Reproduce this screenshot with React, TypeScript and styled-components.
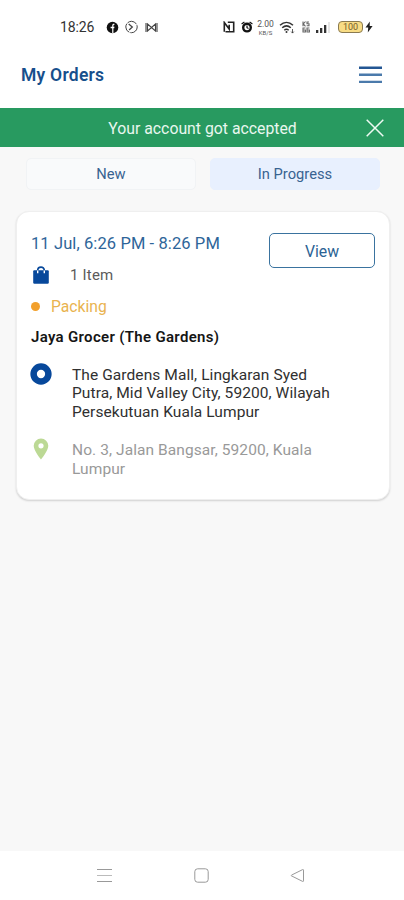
import React from "react";
import styled, { createGlobalStyle } from "styled-components";

const navy = "#174f8c";

const GlobalStyle = createGlobalStyle`
  * { box-sizing: border-box; }
  body { margin: 0; background: #f8f8f8; font-family: Roboto, "Liberation Sans", sans-serif; }
  button { font: inherit; margin: 0; padding: 0; cursor: pointer; }
  svg { display: block; flex: none; }
`;

const Screen = styled.div`
  width: 404px;
  height: 900px;
  display: flex;
  flex-direction: column;
  background: #f8f8f8;
  overflow: hidden;
`;

const StatusBar = styled.div`
  height: 52px;
  padding: 2px 31px 0 60px;
  display: flex;
  align-items: center;
  justify-content: space-between;
  background: #fff;
  color: #333;
`;

const StatusStart = styled.div`
  display: flex;
  align-items: center;
  gap: 6.5px;
`;

const Clock = styled.time`
  width: 39px;
  font-size: 14px;
  letter-spacing: -0.1px;
`;

const StatusEnd = styled.div`
  display: grid;
  grid-template-columns: 18px 15px 23px 23px 14px 22px 27px 8px;
  align-items: center;
`;

const NetSpeed = styled.div`
  width: 19px;
  display: flex;
  flex-direction: column;
  align-items: center;
  font-size: 8.5px;
  line-height: 10px;
  color: #555;
`;

const SpeedUnit = styled.span`
  font-size: 6px;
  line-height: 7px;
`;

const Battery = styled.div`
  width: 25px;
  height: 12px;
  border: 1px solid #8a7a50;
  border-radius: 4px;
  background: #f8dc85;
  color: #75602a;
  font-size: 9px;
  line-height: 10px;
  text-align: center;
`;

const Header = styled.header`
  height: 56px;
  padding: 0 22px 10px 21px;
  display: flex;
  align-items: center;
  justify-content: space-between;
  background: #fff;
`;

const Title = styled.h1`
  margin: 0;
  font-size: 17.5px;
  font-weight: 600;
  letter-spacing: 0.25px;
  color: ${navy};
`;

const IconButton = styled.button`
  display: flex;
  border: 0;
  background: none;
`;

const Banner = styled.div`
  height: 39px;
  padding: 0 20px 0 39px;
  display: flex;
  align-items: center;
  background: #289a60;
  color: #e9f7ef;
`;

const BannerText = styled.p`
  flex: 1;
  margin: 0;
  padding-top: 1px;
  text-align: center;
  font-size: 15.8px;
`;

const Tabs = styled.div`
  display: grid;
  grid-template-columns: 170px 170px;
  gap: 14px;
  padding: 11px 0 0 26px;
`;

const Tab = styled.button<{ $active?: boolean }>`
  height: 32px;
  border: 1px solid ${(p) => (p.$active ? "#e8f0fe" : "#f1f3f5")};
  border-radius: 5px;
  background: ${(p) => (p.$active ? "#e8f0fe" : "#f9fafb")};
  color: #386391;
  font-size: 14.7px;
`;

const Card = styled.article`
  height: 289px;
  margin: 21px 14px 0 16px;
  padding: 21px 14px 0 14px;
  border: 1px solid #efefef;
  border-radius: 13px;
  background: #fff;
  box-shadow: 0 1px 2px rgba(0, 0, 0, 0.16);
`;

const CardTop = styled.div`
  display: flex;
  justify-content: space-between;
  height: 85px;
`;

const TimeSlot = styled.div`
  padding-top: 1px;
  line-height: 20px;
  font-size: 16.5px;
  letter-spacing: 0.1px;
  color: #2e6599;
  white-space: nowrap;
`;

const ItemRow = styled.div`
  height: 22px;
  margin-top: 10px;
  padding-left: 2px;
  display: flex;
  align-items: center;
  gap: 21px;
  font-size: 15px;
  letter-spacing: 0.2px;
  color: #5b5b5b;
`;

const StatusRow = styled.div`
  height: 20px;
  margin-top: 10px;
  display: flex;
  align-items: center;
  gap: 11px;
  font-size: 15.7px;
  color: #e9b34f;
`;

const Dot = styled.span`
  width: 9px;
  height: 9px;
  border-radius: 50%;
  background: #f2a02c;
`;

const ViewButton = styled.button`
  width: 106px;
  height: 35px;
  padding-top: 1px;
  border: 1px solid #3a739f;
  border-radius: 5px;
  background: #fff;
  color: #2c6394;
  font-size: 15.8px;
`;

const Store = styled.h2`
  margin: 8px 0 0;
  font-size: 15px;
  line-height: 22px;
  font-weight: 600;
  letter-spacing: 0.32px;
  color: #151515;
`;

const Stop = styled.div<{ $muted?: boolean }>`
  display: flex;
  align-items: flex-start;
  margin-top: ${(p) => (p.$muted ? "20px" : "18px")};
  color: ${(p) => (p.$muted ? "#999" : "#303030")};
`;

const StopIcon = styled.div`
  width: 41px;
  margin: -3px 0 0 -1px;
  padding-right: 1px;
  box-sizing: content-box;
`;

const Address = styled.address`
  font-style: normal;
  font-size: 15.5px;
  line-height: 18.4px;
  letter-spacing: 0.08px;
  white-space: pre-line;
`;

const NavBar = styled.nav`
  height: 49px;
  margin-top: auto;
  padding: 0 99px 0 97px;
  display: flex;
  align-items: center;
  justify-content: space-between;
  background: #fff;
`;

export default function App() {
  return (
    <>
      <GlobalStyle />
      <Screen>
        <StatusBar>
          <StatusStart>
            <Clock>18:26</Clock>
            <svg width="13" height="13" viewBox="0 0 13 13">
              <circle cx="6.5" cy="6.5" r="5.8" fill="#111" />
              <path d="M6.2 12.300V7.300H4.600V5.700h1.600V4.600c0-1.400.8-2 2.200-1.800V4c-.8 0-1 .2-1 .7v1h1.100L8.200 7.300h-.8v5z" fill="#fff" />
            </svg>
            <svg width="13" height="14" viewBox="0 0 13 14" fill="none" stroke="#444">
              <circle cx="6.5" cy="7" r="5.7" strokeDasharray="10 1" />
              <path d="m3.7 4 3.6 3-3.2 3" strokeWidth="1.3" />
            </svg>
            <svg width="13" height="11" viewBox="0 0 13 11" fill="none" stroke="#444" strokeWidth="1.1">
              <path d="M1 1v9M12 1v9M2.500 2 6.500 5.500l4-3.500v7l-4-3.500-4 3.500z" />
            </svg>
          </StatusStart>
          <StatusEnd>
            <svg width="12" height="12" viewBox="0 0 12 12" fill="none" stroke="#222" strokeWidth="1.6">
              <path d="M1.300 10.700V1.500L6.200 8V3.800M4.800 1.300h5.900v9.400H2.500" />
            </svg>
            <svg width="12" height="12" viewBox="0 0 12 12">
              <circle cx="6" cy="6.6" r="3.8" fill="#fff" stroke="#111" strokeWidth="2.4" />
              <path d="m.6 3 2.800-2M11.400 3 8.600 1M6 4.500v2.200l1.500.8" stroke="#111" strokeWidth="1.2" fill="none" />
            </svg>
            <NetSpeed>
              2.00
              <SpeedUnit>KB/S</SpeedUnit>
            </NetSpeed>
            <svg width="16" height="13" viewBox="0 0 16 13" fill="none" stroke="#333" strokeWidth="1.5">
              <path d="M1 4.200c4-3.700 9-3.700 13 0M3.200 6.800c2.700-2.400 6-2.400 8.600 0M5.300 9.200c1.400-1.200 3-1.200 4.400 0" />
              <circle cx="7.5" cy="11" r="1" fill="#333" stroke="none" />
              <path d="M13.500 8v4m-1.300-1.400 1.300 1.500 1.300-1.500" strokeWidth=".8" />
            </svg>
            <svg width="8" height="12" viewBox="0 0 8 12" fill="none" stroke="#666" strokeWidth="1.1">
              <path d="M1 .5v4.800M3.500.5 1.300 3l2.200 2.300M7 1H5v1.800h2v2H4.700M3.400 7H1v4h2.400V9H1M7.400 7H5v4h2.400V9H5" />
            </svg>
            <svg width="15" height="12" viewBox="0 0 15 12" fill="#333">
              <path d="M0 9h2.300v3H0zM4 7h2.300v5H4zM8 4h2.300v8H8z" />
              <path d="M12.500 1h1v11h-1z" fill="#ccc" />
            </svg>
            <Battery>100</Battery>
            <svg width="8" height="12" viewBox="0 0 8 12" fill="#222">
              <path d="M4.800.5.5 6.500h2.700L2.800 11.500 7.600 5H4.700z" />
            </svg>
          </StatusEnd>
        </StatusBar>
        <Header>
          <Title>My Orders</Title>
          <IconButton aria-label="Menu">
            <svg width="23" height="18" viewBox="0 0 23 18">
              <path d="M0 .5h23v2.500H0z" fill="#235693" />
              <path d="M0 7.600h23v2.400H0zM0 14.700h23v2.400H0z" fill="#4b7aab" />
            </svg>
          </IconButton>
        </Header>
        <Banner>
          <BannerText>Your account got accepted</BannerText>
          <IconButton aria-label="Close">
            <svg width="18" height="18" viewBox="0 0 18 18" stroke="#eefaf3" strokeWidth="1.5">
              <path d="m.7.7 16.600 16.600M17.300.7.7 17.300" />
            </svg>
          </IconButton>
        </Banner>
        <Tabs>
          <Tab>New</Tab>
          <Tab $active>In Progress</Tab>
        </Tabs>
        <Card>
          <CardTop>
            <div>
              <TimeSlot>11 Jul, 6:26 PM - 8:26 PM</TimeSlot>
              <ItemRow>
                <svg width="16" height="18" viewBox="0 0 16 18">
                  <path d="M1.200 4.300h13.600q1 0 1 1v11.200q0 1.200-1.200 1.200H1.400q-1.200 0-1.200-1.200V5.300q0-1 1-1z" fill="#07489b" />
                  <path d="M4.700 4.500C4.700 0 11.300 0 11.300 4.500" fill="none" stroke="#07489b" strokeWidth="1.7" />
                  <path d="M4.700 4.600v2.600M11.300 4.600v2.600" fill="none" stroke="#fff" strokeWidth="1.4" />
                </svg>
                1 Item
              </ItemRow>
              <StatusRow>
                <Dot />
                Packing
              </StatusRow>
            </div>
            <ViewButton>View</ViewButton>
          </CardTop>
          <Store>Jaya Grocer (The Gardens)</Store>
          <Stop>
            <StopIcon>
              <svg width="22" height="22" viewBox="0 0 22 22">
                <circle cx="11" cy="11" r="7.4" fill="#fff" stroke="#07489b" strokeWidth="6.5" />
              </svg>
            </StopIcon>
            <Address>{"The Gardens Mall, Lingkaran Syed\nPutra, Mid Valley City, 59200, Wilayah\nPersekutuan Kuala Lumpur"}</Address>
          </Stop>
          <Stop $muted>
            <StopIcon>
              <svg width="22" height="22" viewBox="0 0 22 22">
                <path fillRule="evenodd" d="M11 .5a7.300 7.300 0 0 0-7.300 7.300C3.700 13 11 21.500 11 21.500s7.300-8.500 7.300-13.700A7.300 7.300 0 0 0 11 .5zm0 4.700a2.600 2.600 0 1 1 0 5.200 2.600 2.600 0 0 1 0-5.200z" fill="#bcd995" />
              </svg>
            </StopIcon>
            <Address>{"No. 3, Jalan Bangsar, 59200, Kuala\nLumpur"}</Address>
          </Stop>
        </Card>
        <NavBar>
          <IconButton aria-label="Recent apps">
            <svg width="15" height="15" viewBox="0 0 15 15" fill="none">
              <path d="M0 1.500h15M0 13.500h15" stroke="#999" />
              <path d="M0 7.500h15" stroke="#bbb" />
            </svg>
          </IconButton>
          <IconButton aria-label="Home">
            <svg width="15" height="15" viewBox="0 0 15 15" fill="none" stroke="#999">
              <rect x=".8" y=".8" width="13.4" height="13.4" rx="2.8" />
            </svg>
          </IconButton>
          <IconButton aria-label="Back">
            <svg width="15" height="15" viewBox="0 0 15 15" fill="none" stroke="#999">
              <path d="M12.600 1.600 1.500 7.100q-.8.400 0 .8l11.100 5.500q.9.300.9-.5V2.100q0-.8-.9-.5z" />
            </svg>
          </IconButton>
        </NavBar>
      </Screen>
    </>
  );
}
